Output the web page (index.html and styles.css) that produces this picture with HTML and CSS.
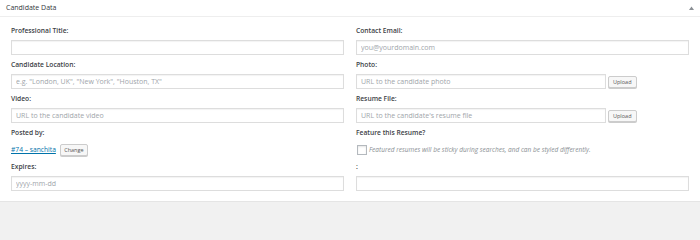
FILE: index.html
```html
<!DOCTYPE html>
<html>
<head>
<meta charset="utf-8">
<link rel="stylesheet" href="styles.css">
</head>
<body>
<div class="postbox">
  <div class="hndle">
    <span class="title">Candidate Data</span>
    <span class="toggle"><svg width="5" height="4" viewBox="0 0 5 4"><path d="M0 4 L2.5 0.5 L5 4 Z" fill="#8a8f94"/></svg></span>
  </div>
  <div class="inside">
    <div class="field">
      <label class="lbl">Professional Title:</label>
      <input class="txt" type="text">
    </div>
    <div class="field">
      <label class="lbl">Contact Email:</label>
      <input class="txt" type="text" placeholder="you@yourdomain.com">
    </div>
    <div class="field">
      <label class="lbl">Candidate Location:</label>
      <input class="txt" type="text" placeholder="e.g. &quot;London, UK&quot;, &quot;New York&quot;, &quot;Houston, TX&quot;">
    </div>
    <div class="field">
      <label class="lbl">Photo:</label>
      <div class="upload-row">
        <input class="txt narrow" type="text" placeholder="URL to the candidate photo">
        <button class="btn">Upload</button>
      </div>
    </div>
    <div class="field">
      <label class="lbl">Video:</label>
      <input class="txt" type="text" placeholder="URL to the candidate video">
    </div>
    <div class="field">
      <label class="lbl">Resume File:</label>
      <div class="upload-row">
        <input class="txt narrow" type="text" placeholder="URL to the candidate's resume file">
        <button class="btn">Upload</button>
      </div>
    </div>
    <div class="field">
      <label class="lbl">Posted by:</label>
      <div class="posted">
        <a class="user" href="#">#74 – sanchita</a>
        <button class="btn change">Change</button>
      </div>
    </div>
    <div class="field">
      <label class="lbl">Feature this Resume?</label>
      <div class="check-row">
        <span class="checkbox"></span>
        <span class="desc">Featured resumes will be sticky during searches, and can be styled differently.</span>
      </div>
    </div>
    <div class="field">
      <label class="lbl">Expires:</label>
      <input class="txt" type="text" placeholder="yyyy-mm-dd">
    </div>
    <div class="field">
      <label class="lbl">:</label>
      <input class="txt" type="text">
    </div>
  </div>
</div>
</body>
</html>
```
FILE: styles.css
```css
html, body {
  margin: 0;
  padding: 0;
  background: #f1f1f1;
  font-family: "Open Sans", "Liberation Sans", sans-serif;
  color: #23282d;
}
.postbox {
  background: #fff;
  border-bottom: 1px solid #e5e5e5;
  width: 700px;
}
.hndle {
  height: 16px;
  border-bottom: 1px solid #eeeeee;
  display: flex;
  align-items: center;
  justify-content: space-between;
  padding: 0 6px;
}
.title {
  font-size: 7px;
  line-height: 16px;
  color: #32373c;
}
.toggle {
  display: flex;
}
.inside {
  display: grid;
  grid-template-columns: 333px 333px;
  column-gap: 12px;
  row-gap: 5px;
  padding: 9px 11px 10px 11px;
}
.field {
  display: flex;
  flex-direction: column;
}
.lbl {
  font-size: 6.7px;
  font-weight: 600;
  line-height: 10px;
  height: 10px;
  margin-bottom: 4px;
  color: #3c4146;
}
.txt {
  box-sizing: border-box;
  height: 15px;
  width: 100%;
  margin: 0;
  border: 1px solid #dddddd;
  box-shadow: inset 0 1px 1px rgba(0,0,0,0.05);
  padding: 0 4px;
  font-family: "Open Sans", "Liberation Sans", sans-serif;
  font-size: 7px;
  color: #32373c;
  background: #fff;
  outline: none;
}
.txt::placeholder {
  color: #a0a5aa;
}
.upload-row {
  display: flex;
  align-items: center;
  gap: 2px;
}
.txt.narrow {
  width: 250px;
}
.btn {
  box-sizing: border-box;
  height: 12px;
  padding: 0 4px;
  margin: 0;
  border: 1px solid #cccccc;
  border-radius: 2px;
  background: #f7f7f7;
  box-shadow: 0 1px 0 #cccccc;
  font-family: "Open Sans", "Liberation Sans", sans-serif;
  font-size: 5.5px;
  line-height: 10px;
  color: #555555;
}
.posted {
  display: flex;
  align-items: center;
  gap: 4px;
  height: 15px;
}
.user {
  font-size: 6.7px;
  color: #0073aa;
  text-decoration: underline;
}
.btn.change {
  width: 28px;
  padding: 0;
}
.check-row {
  display: flex;
  align-items: center;
  gap: 2px;
  height: 15px;
  padding-left: 1px;
}
.checkbox {
  box-sizing: border-box;
  width: 10px;
  height: 10px;
  border: 1px solid #b4b9be;
  box-shadow: inset 0 1px 2px rgba(0,0,0,0.1);
  background: #fff;
}
.desc {
  font-size: 6.5px;
  font-style: italic;
  color: #8a8f94;
}
```
